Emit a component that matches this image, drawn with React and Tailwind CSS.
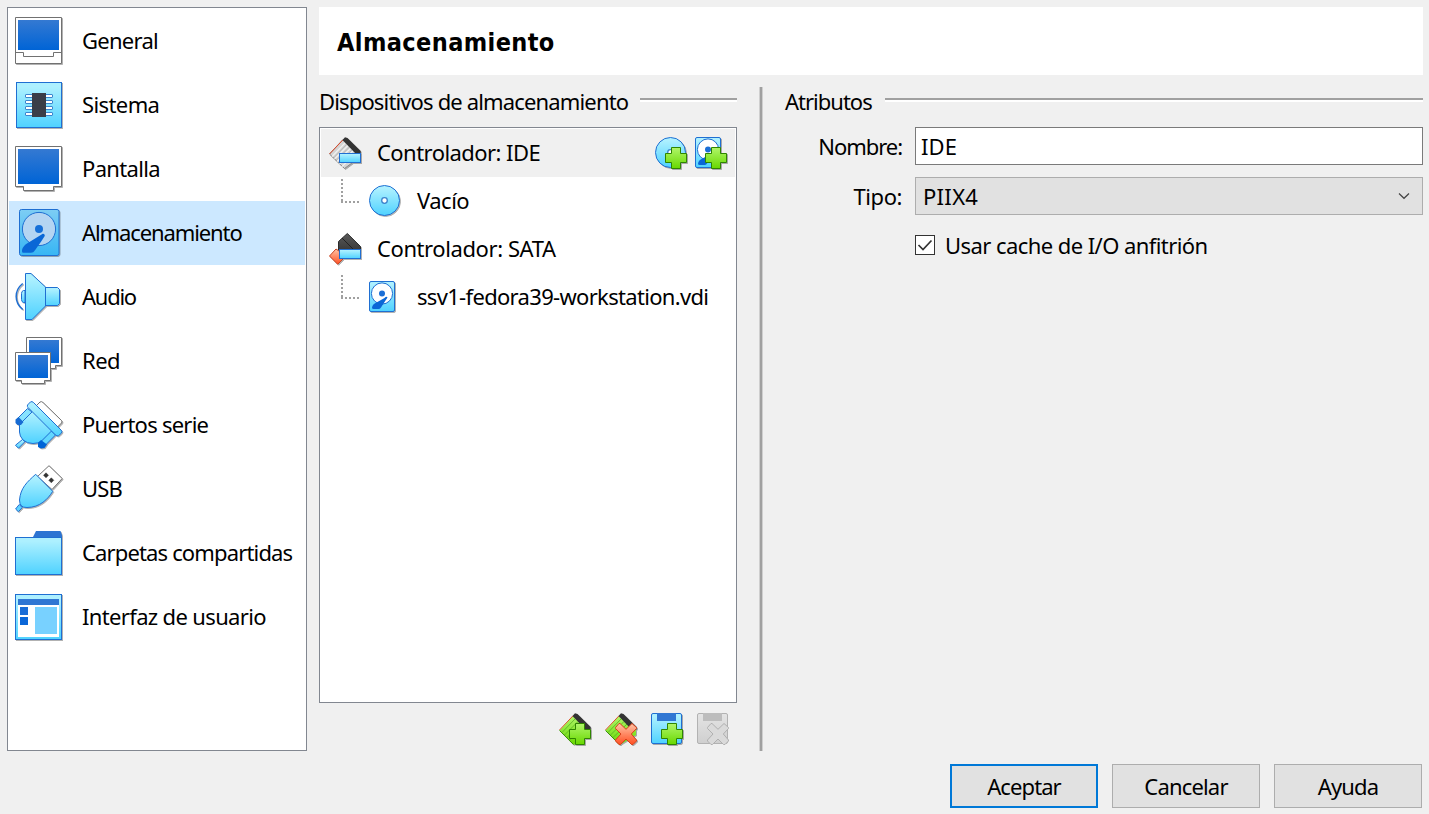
import React from "react";

const BLUE = "#1f6fd2";

function Defs() {
  return (
    <svg width="0" height="0" className="absolute" aria-hidden="true">
      <defs>
        <linearGradient id="screen" x1="0" y1="0" x2="0" y2="1">
          <stop offset="0" stopColor="#3479d2" />
          <stop offset="1" stopColor="#0064d6" />
        </linearGradient>
        <linearGradient id="cyan" x1="0" y1="0" x2="0" y2="1">
          <stop offset="0.1" stopColor="#adf0ff" />
          <stop offset="1" stopColor="#4fd2ff" />
        </linearGradient>
        <linearGradient id="selected" x1="0" y1="0" x2="0" y2="1">
          <stop offset="0" stopColor="#7dcdf4" />
          <stop offset="1" stopColor="#37b6f4" />
        </linearGradient>
        <linearGradient id="green" x1="0" y1="0" x2="0" y2="1">
          <stop offset="0" stopColor="#b0f66a" />
          <stop offset="1" stopColor="#68d800" />
        </linearGradient>
        <linearGradient id="red" x1="0" y1="0" x2="0" y2="1">
          <stop offset="0" stopColor="#ffc4a6" />
          <stop offset="1" stopColor="#ff4f22" />
        </linearGradient>
        <linearGradient id="gray" x1="0" y1="0" x2="0" y2="1">
          <stop offset="0" stopColor="#e4e4e4" />
          <stop offset="1" stopColor="#cfcfcf" />
        </linearGradient>
        <linearGradient id="dark" x1="0" y1="0" x2="0" y2="1">
          <stop offset="0" stopColor="#5a5a5a" />
          <stop offset="1" stopColor="#3a3a3a" />
        </linearGradient>
      </defs>
    </svg>
  );
}

const SHADOW = "shrink-0 overflow-visible drop-shadow-[1px_1px_0.5px_rgba(0,0,0,0.3)]";

function Icon({ children, size = 48 }) {
  return (
    <svg width={size} height={size} viewBox={`0 0 ${size} ${size}`} className={SHADOW}>
      {children}
    </svg>
  );
}

const GeneralIcon = () => (
  <Icon>
    <path d="M.5 .5h46v46h-46z" fill="#fff" stroke="#717171" />
    <path d="M0 35.5h8.5v4h30v-4H47" fill="none" stroke="#717171" />
    <rect x="3" y="3" width="41" height="30" fill="url(#screen)" />
  </Icon>
);

const SystemIcon = () => (
  <Icon>
    <rect x="1.5" y="1.5" width="45" height="45" fill="url(#cyan)" stroke={BLUE} />
    {[15, 21, 27, 33].map((y) => (
      <rect key={y} x="10.5" y={y - 1.5} width="27" height="3" rx=".5" fill="#fff" stroke="#3b86cf" />
    ))}
    <rect x="17" y="12" width="14" height="24" fill="#3a3d47" />
  </Icon>
);

const DisplayIcon = () => (
  <Icon>
    <path d="M.5 1.5h46v40h-8v4h-30v-4h-8z" fill="#fff" stroke="#717171" />
    <rect x="3" y="4" width="41" height="35" fill="url(#screen)" />
  </Icon>
);

const StorageIcon = () => (
  <Icon>
    <rect x="4.5" y=".5" width="39.5" height="46" rx="2" fill="url(#selected)" stroke={BLUE} />
    <circle cx="24" cy="20" r="16.6" fill="#b4d5f2" stroke={BLUE} />
    <circle cx="24" cy="20" r="4" fill="#1670d8" />
    <path d="M27.4 25C28.6 24.4 30.2 25.5 29.7 27L26.5 32L20 41.2Q18.5 43.7 16 43.7H8Q6.8 43.7 7 42V41Q8 37 12 34.5Z" fill="#0a67d6" />
  </Icon>
);

const AudioIcon = () => (
  <Icon>
    <path d="M10 17.5H8.5Q6.5 18 6.5 20.5v6q0 2.500 2 3H10z" fill="url(#cyan)" stroke={BLUE} />
    <path d="M7.700 10.500C-1 17.500 -1 29.500 7.700 36.500" fill="none" stroke={BLUE} strokeWidth="1.500" />
    <path d="M30.500 14.500h12l2 2v14l-2 2h-12z" fill="url(#cyan)" stroke={BLUE} strokeLinejoin="round" />
    <path d="M10.500 .5H16L30.500 14V33L17 46.500H10.500z" fill="url(#cyan)" stroke={BLUE} strokeLinejoin="round" />
  </Icon>
);

const NetworkIcon = () => (
  <Icon>
    <path d="M11.500 .5h35v28h-6v3h-24v-3h-5z" fill="#fff" stroke="#717171" />
    <rect x="14" y="3" width="30" height="23" fill="url(#screen)" />
    <path d="M.5 15.500h35v28h-6v3h-23v-3h-6z" fill="#fff" stroke="#717171" />
    <rect x="3" y="18" width="30" height="23" fill="url(#screen)" />
  </Icon>
);

const SerialIcon = () => (
  <Icon>
    <path d="M21 5L25 1Q26.500 0 28 1.500L46.500 19.500Q47.500 21 46.500 22L42 26.500Z" fill="#fff" stroke="#717171" />
    <path d="M7.500 38.500L.5 44.200L3.500 47.200L9.800 40.800Z" fill="url(#cyan)" stroke={BLUE} />
    <path d="M16.500 9L4.500 21.500V31Q4.500 35 8 39Q12 42.500 18 42.500Q23 42.500 27 40L39 29.500Z" fill="url(#cyan)" stroke={BLUE} />
    <path d="M12.500 7.500L2 18L6 22L17 11Z" fill="#87e3ff" stroke={BLUE} />
    <path d="M3.500 16L.5 18.500V22L2.500 24H6L8.500 21Z" fill="#176bd3" />
    <path d="M36.500 30L26 40.500L30 44.500L40.500 34Z" fill="#62d7ff" stroke={BLUE} />
    <path d="M26 39L23 42V46L26 47.500L29.500 47L32 43.500Z" fill="#0064d6" />
    <path d="M12.500 4L15.500 .9Q17 0 18.500 1.500L46 29Q47.500 30.500 46.500 32L43.500 34.700Q42 35.500 40.500 34L13 6.500Q12 5.500 12.500 4Z" fill="url(#cyan)" stroke={BLUE} />
  </Icon>
);

const UsbIcon = () => (
  <Icon>
    <path d="M34 .7L47.200 13.500L37 24.500L22.500 11.500Z" fill="#fff" stroke="#717171" strokeLinejoin="round" />
    <path d="M31 7.800l2.500 2.500l-2.500 2.500l-2.500-2.500zM36.300 12.800l2.500 2.500l-2.500 2.500l-2.500-2.500z" fill="#333" stroke="#333" strokeWidth=".5" strokeLinejoin="round" />
    <path d="M20.700 9.300L37.700 26.300C33 34 25 42.500 12 42.500Q8 42.500 6.500 41Q4.500 39 4.500 35C5.500 23 12 17 20.700 9.300Z" fill="url(#cyan)" stroke={BLUE} strokeLinejoin="round" />
    <path d="M4.200 39.500L7.300 42.500L3.400 46.700L.6 44Z" fill="#5fd3ff" stroke={BLUE} />
  </Icon>
);

const FolderIcon = () => (
  <Icon>
    <path d="M17.500 9L21 2H45.500L47 6V9Z" fill="#2c74d2" />
    <rect x=".5" y="8.500" width="46" height="37" fill="url(#cyan)" stroke={BLUE} />
  </Icon>
);

const InterfaceIcon = () => (
  <Icon>
    <rect x=".5" y="1.500" width="46" height="45" fill="url(#cyan)" stroke={BLUE} />
    <rect x="3" y="6" width="41" height="38" fill="#fff" />
    <rect x="3" y="6" width="41" height="6" fill="#2f76d3" />
    <rect x="5" y="14" width="8" height="8" fill="#1a6dd6" />
    <rect x="5" y="24" width="8" height="8" fill="#0a67d8" />
    <rect x="20" y="14" width="22" height="27" fill="#78d1ff" />
  </Icon>
);

const Plus = () => (
  <path d="M16.500 10.500h9v6h6v9h-6v6h-9v-6h-6v-9h6z" fill="url(#green)" stroke="#2f8500" />
);

const Cross = ({ fill = "url(#red)", stroke = "#d8401a" }) => (
  <path
    d="M15 10.500L21 16.300L27 10.500L31.500 14.500L31.500 15.500L26.300 21L31.500 27V28L28 31.500H26.500L21 26L15.500 31.500H14L10.500 28V27L16 21L10.500 15.500V14.500L14 10.500Z"
    fill={fill}
    stroke={stroke}
    strokeLinejoin="round"
  />
);

const IdeIcon = () => (
  <Icon size={32}>
    <path d="M.5 17L14 2.500L31 16V20L15.500 31.500Z" fill="#d4d4d4" stroke="#888" />
    <path d="M3 19.500L16 6M5.500 22L19 8.500M8 24.500L22 11M10.500 27L25 13M13 29.500L20 23" stroke="#f1f1f1" strokeWidth="1.100" />
    <path d="M4.500 21L17.500 7.500M7 23.500L20.500 10M9.500 26L23.500 12.500" stroke="#aaa" strokeWidth=".7" />
    <path d="M.5 17L14 2.800" stroke="#dd4a2a" />
    <path d="M13.500 3L16 .3L18.500 1L31.700 14V16.500H26.500Z" fill="#333" />
    <rect x="10.500" y="16.500" width="21" height="9" fill="url(#cyan)" stroke={BLUE} />
  </Icon>
);

const SataIcon = () => (
  <Icon size={32}>
    <path d="M7 16L.5 23L8.700 31.300L17 23Z" fill="url(#red)" stroke="#c84320" />
    <path d="M18.300 .5L31.500 13.500V17H9.500V8.500Z" fill="url(#dark)" stroke="#2b2b2b" />
    <path d="M13 5L24 16" stroke="#222" />
    <rect x="10.500" y="16.500" width="21" height="9" fill="url(#cyan)" stroke={BLUE} />
  </Icon>
);

const DiscIcon = ({ plus }) => (
  <Icon size={32}>
    <circle cx="15.500" cy="15.500" r="15" fill="url(#cyan)" stroke={BLUE} />
    <circle cx="15.500" cy="15.500" r="2.800" fill="#fff" stroke="#3b82cc" strokeWidth="1.300" />
    {plus && <Plus />}
  </Icon>
);

const DriveIcon = ({ plus }) => (
  <Icon size={32}>
    <rect x=".5" y=".5" width="25" height="30" rx="1.500" fill="url(#cyan)" stroke={BLUE} />
    <circle cx="13" cy="12.500" r="10.600" fill="#fff" stroke={BLUE} />
    <circle cx="13" cy="12.500" r="3" fill="#1b6fd6" />
    <path d="M15.500 17Q17.500 15 18.500 16.500L15.500 21L12 26.500Q11 28 9.500 28H4.500Q3 28 3 26.500Q3.500 23 7.500 21.500Z" fill="#0a67d6" />
    {plus && <Plus />}
  </Icon>
);

const Card = ({ children }) => (
  <Icon size={32}>
    <path d="M.5 17.500L14 3L31 16V22L15.500 31.500H14Z" fill="url(#green)" />
    <path d="M.5 17.500L14.500 31.500" stroke="#3c8a10" />
    <path d="M3 19.500L16 6M5.500 22L19 8.500M8 24.500L22 11M10.500 27L25 13" stroke="#57ad22" strokeWidth=".8" />
    <path d="M.5 17L14 2.800" stroke="#d9532a" />
    <path d="M13.500 3L16 .3L18.500 1L31.700 14V16.500H26.500Z" fill="#333" />
    {children}
  </Icon>
);

const FloppyAddIcon = () => (
  <Icon size={32}>
    <rect x=".5" y=".5" width="30" height="30" rx="1.500" fill="url(#cyan)" stroke={BLUE} />
    <rect x="6" y="0" width="19" height="8" fill="#3177d3" />
    <Plus />
  </Icon>
);

const FloppyRemoveIcon = () => (
  <svg width="32" height="32" viewBox="0 0 32 32" className="shrink-0">
    <rect x=".5" y=".5" width="30" height="30" rx="1.500" fill="url(#gray)" stroke="#b2b2b2" />
    <rect x="6" y="0" width="19" height="8" fill="#bdbdbd" />
    <Cross fill="#dadada" stroke="#b0b0b0" />
  </svg>
);

const SECTIONS = [
  { label: "General", icon: GeneralIcon, track: "tracking-[-0.73px]" },
  { label: "Sistema", icon: SystemIcon, track: "tracking-[-0.6px]" },
  { label: "Pantalla", icon: DisplayIcon, track: "tracking-[-0.66px]" },
  { label: "Almacenamiento", icon: StorageIcon, track: "tracking-[-1.1px]", selected: true },
  { label: "Audio", icon: AudioIcon, track: "tracking-[-1.25px]" },
  { label: "Red", icon: NetworkIcon, track: "tracking-[-0.5px]" },
  { label: "Puertos serie", icon: SerialIcon, track: "tracking-[-0.75px]" },
  { label: "USB", icon: UsbIcon, track: "tracking-[-0.8px]" },
  { label: "Carpetas compartidas", icon: FolderIcon, track: "tracking-[-0.85px]" },
  { label: "Interfaz de usuario", icon: InterfaceIcon, track: "tracking-[-0.65px]" },
];

function Sidebar() {
  return (
    <nav className="w-[300px] h-[744px] shrink-0 border border-[#828790] bg-white p-px">
      {SECTIONS.map(({ label, icon: Glyph, track, selected }) => (
        <div key={label} className={`flex h-16 items-center pl-1.5 ${selected ? "bg-[#cce8ff]" : ""}`}>
          <Glyph />
          <span className={`ml-[19px] pb-0.5 ${track}`}>{label}</span>
        </div>
      ))}
    </nav>
  );
}

function GroupTitle({ children, track, gap }) {
  return (
    <div className="flex h-[30px] items-center">
      <span className={`pb-0.5 ${track}`}>{children}</span>
      <span className={`h-1 flex-1 border-t-2 border-[#a0a0a0] bg-white mt-[-4px] ${gap}`} />
    </div>
  );
}

function Branch() {
  return (
    <svg width="20" height="24" className="mb-[-4px] shrink-0">
      <path d="M1 0V22M0 23H20" fill="none" stroke="#a0a0a0" strokeWidth="2" strokeDasharray="2 2" />
    </svg>
  );
}

function Child({ children, label, track }) {
  return (
    <div className="flex h-12 items-center pl-5">
      <div className="flex h-12 items-start pt-0.5">
        <Branch />
      </div>
      <div className="ml-2 flex h-8">{children}</div>
      <span className={`ml-4 pb-0.5 ${track}`}>{label}</span>
    </div>
  );
}

function Devices() {
  return (
    <section className="w-[418px] shrink-0 pt-3">
      <GroupTitle track="tracking-[-0.85px]" gap="ml-[12px]">
        Dispositivos de almacenamiento
      </GroupTitle>
      <div className="mt-2.5 h-[576px] border border-[#828790] bg-white p-px">
        <div className="flex h-12 items-center bg-[#f0f0f0] pl-2 pr-2">
          <IdeIcon />
          <span className="ml-4 flex-1 pb-0.5 tracking-[-0.55px]">Controlador: IDE</span>
          <div className="flex gap-2">
            <DiscIcon plus />
            <DriveIcon plus />
          </div>
        </div>
        <Child label="Vacío" track="tracking-[-0.5px]">
          <DiscIcon />
        </Child>
        <div className="flex h-12 items-center pl-2">
          <SataIcon />
          <span className="ml-4 pb-0.5 tracking-[-0.41px]">Controlador: SATA</span>
        </div>
        <Child label="ssv1-fedora39-workstation.vdi" track="tracking-[-0.68px]">
          <DriveIcon />
        </Child>
      </div>
      <div className="mt-2.5 flex justify-end gap-3.5 pr-2">
        <Card>
          <Plus />
        </Card>
        <Card>
          <Cross />
        </Card>
        <FloppyAddIcon />
        <FloppyRemoveIcon />
      </div>
    </section>
  );
}

function Attributes() {
  return (
    <section className="flex-1 pt-3">
      <GroupTitle track="tracking-[-1px]" gap="ml-[13px]">
        Atributos
      </GroupTitle>
      <div className="mt-2.5 grid grid-cols-[117px_1fr] gap-x-[13px] gap-y-3">
        <label className="self-center text-right tracking-[-1.05px]">Nombre:</label>
        <div className="flex h-[38px] items-center border border-[#7a7a7a] bg-white pl-[5px] tracking-[0.1px]">IDE</div>
        <label className="self-center text-right tracking-[-0.43px]">Tipo:</label>
        <div className="flex h-[38px] items-center border border-[#adadad] bg-[#e1e1e1] pl-[7px] pr-3">
          <span className="flex-1 tracking-[0.3px]">PIIX4</span>
          <svg width="12" height="8" viewBox="0 0 12 8" className="shrink-0">
            <path d="M1 1.500L6 6.300L11 1.500" fill="none" stroke="#444" strokeWidth="1.200" />
          </svg>
        </div>
        <div className="col-start-2 flex items-center pt-[3px]">
          <svg width="20" height="20" viewBox="0 0 20 20" className="mt-[-1px] shrink-0">
            <rect x=".5" y=".5" width="19" height="19" fill="#fff" stroke="#333" />
            <path d="M3.500 10L8 14.500L16.500 5.500" fill="none" stroke="#333" strokeWidth="1.700" />
          </svg>
          <span className="ml-2.5 tracking-[-0.57px]">Usar cache de I/O anfitrión</span>
        </div>
      </div>
    </section>
  );
}

const BUTTONS = [
  { label: "Aceptar", style: "border-2 border-[#0078d7] tracking-[-0.9px]" },
  { label: "Cancelar", style: "border border-[#adadad] tracking-[-0.83px]" },
  { label: "Ayuda", style: "border border-[#adadad] tracking-[-0.8px]" },
];

export default function App() {
  return (
    <div className="h-[814px] w-[1429px] overflow-hidden bg-[#f0f0f0] pl-[7px] pt-[7px] text-[22px] leading-[30px] text-black whitespace-nowrap font-['Noto_Sans',sans-serif]">
      <Defs />
      <div className="flex">
        <Sidebar />
        <main className="ml-3 w-[1104px]">
          <h1 className="flex h-[68px] items-center bg-white pl-[18px] pt-1 text-[25px] font-bold tracking-[0.4px] font-['DejaVu_Sans_Condensed','DejaVu_Sans',sans-serif]">
            Almacenamiento
          </h1>
          <div className="flex">
            <Devices />
            <div className="ml-[22px] mr-[22px] mt-3 h-[664px] w-1 border-x border-[#cfcfcf] bg-[#a0a0a0]" />
            <Attributes />
          </div>
        </main>
      </div>
      <footer className="mt-[13px] flex justify-end gap-3.5 pr-[7px]">
        {BUTTONS.map(({ label, style }) => (
          <button key={label} className={`h-11 w-[148px] bg-[#e1e1e1] ${style}`}>
            {label}
          </button>
        ))}
      </footer>
    </div>
  );
}
